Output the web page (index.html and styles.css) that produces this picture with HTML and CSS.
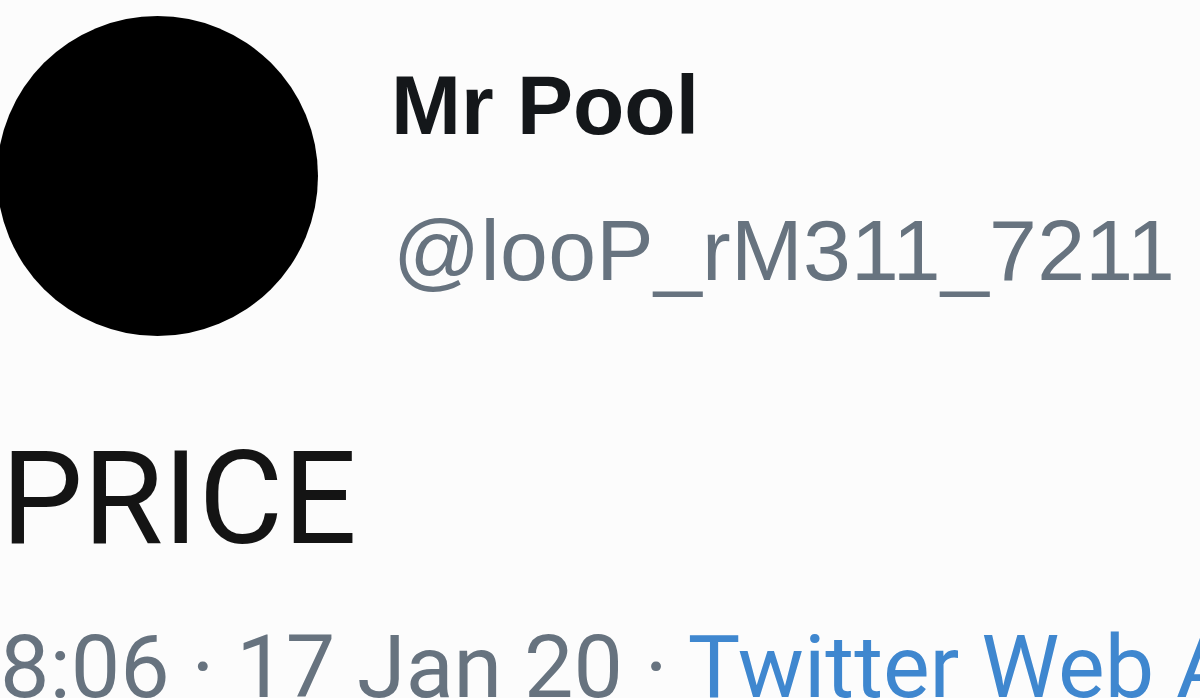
FILE: index.html
```html
<!DOCTYPE html>
<html lang="en">
<head>
<meta charset="utf-8">
<title>Mr Pool</title>
<link rel="stylesheet" href="styles.css">
</head>
<body>
<main class="tweet">
  <header class="author">
    <div class="avatar"></div>
    <div class="names">
      <div class="name">Mr Pool</div>
      <div class="handle">@looP_rM311_7211</div>
    </div>
  </header>
  <p class="text">PRICE</p>
  <div class="meta"><span>8:06 · 17 Jan 20 · </span><span class="source">Twitter Web App</span></div>
</main>
</body>
</html>
```
FILE: styles.css
```css
html, body {
  margin: 0;
  padding: 0;
  background: #fcfcfc;
  overflow: hidden;
}
.tweet {
  width: 1200px;
  height: 698px;
  display: flex;
  flex-direction: column;
  overflow: hidden;
}
.author {
  display: flex;
  align-items: flex-start;
  height: 337px;
  flex: none;
}
.avatar {
  width: 321px;
  height: 320px;
  border-radius: 50%;
  background: #000;
  margin-left: -3px;
  margin-top: 16px;
  flex: none;
}
.names {
  margin-left: 73px;
  padding-top: 63px;
  display: flex;
  flex-direction: column;
  gap: 60px;
}
.name {
  font-family: "Liberation Sans", Arial, sans-serif;
  font-weight: 700;
  font-size: 84px;
  line-height: 1;
  color: #14171a;
}
.handle {
  font-family: "Liberation Sans", Arial, sans-serif;
  font-size: 86px;
  line-height: 1;
  color: #67737f;
  padding-left: 2px;
  letter-spacing: 0.3px;
  white-space: nowrap;
}
.text {
  margin: 97px 0 0 1px;
  font-family: Roboto, sans-serif;
  font-size: 130px;
  line-height: 1;
  color: #141414;
}
.meta {
  margin-top: 59px;
  font-family: Roboto, sans-serif;
  font-size: 88px;
  line-height: 1;
  color: #67737f;
  white-space: nowrap;
}
.source {
  color: #3f87cf;
}
```
